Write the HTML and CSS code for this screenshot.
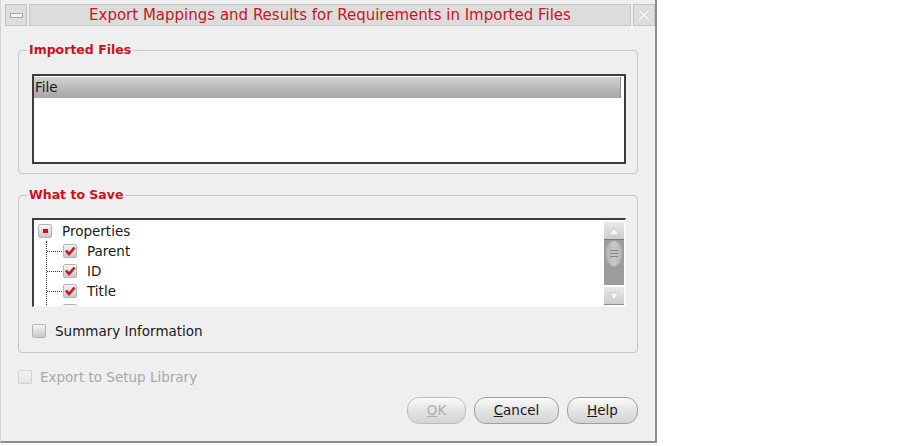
FILE: index.html
```html
<!DOCTYPE html>
<html>
<head>
<meta charset="utf-8">
<link rel="stylesheet" href="styles.css">
</head>
<body>
<div class="window">
  <div class="titlebar">
    <div class="tb-btn"><span class="dash"></span></div>
    <div class="tb-title">Export Mappings and Results for Requirements in Imported Files</div>
    <div class="tb-btn">
      <svg width="14" height="14" viewBox="0 0 14 14"><path d="M2 2 L12 12 M12 2 L2 12" stroke="#c4c4c4" stroke-width="4.5" fill="none" stroke-dasharray="0.8 1.4"/><path d="M2 2 L12 12 M12 2 L2 12" stroke="#f0f0f0" stroke-width="2.4" fill="none"/></svg>
    </div>
  </div>
  <div class="content">
    <fieldset class="group group-files">
      <legend>Imported Files</legend>
      <div class="listbox">
        <div class="list-header">File</div>
      </div>
    </fieldset>

    <fieldset class="group group-save">
      <legend>What to Save</legend>
      <div class="tree">
        <div class="tree-items">
          <div class="row">
            <span class="cb tri"><span class="tri-mark"></span></span>
            <span class="label">Properties</span>
          </div>
          <div class="children">
            <div class="row child"><span class="conn"></span><span class="cb checked"><svg width="14" height="14" viewBox="0 0 14 14"><path d="M3 6.5 L6 10 L11.5 3.5" stroke="#d3101c" stroke-width="2.6" fill="none"/></svg></span><span class="label">Parent</span></div>
            <div class="row child"><span class="conn"></span><span class="cb checked"><svg width="14" height="14" viewBox="0 0 14 14"><path d="M3 6.5 L6 10 L11.5 3.5" stroke="#d3101c" stroke-width="2.6" fill="none"/></svg></span><span class="label">ID</span></div>
            <div class="row child"><span class="conn"></span><span class="cb checked"><svg width="14" height="14" viewBox="0 0 14 14"><path d="M3 6.5 L6 10 L11.5 3.5" stroke="#d3101c" stroke-width="2.6" fill="none"/></svg></span><span class="label">Title</span></div>
            <div class="row child"><span class="conn"></span><span class="cb checked"><svg width="14" height="14" viewBox="0 0 14 14"><path d="M3 6.5 L6 10 L11.5 3.5" stroke="#d3101c" stroke-width="2.6" fill="none"/></svg></span></div>
          </div>
        </div>
        <div class="scrollbar">
          <div class="sb-btn"><svg width="16" height="14" viewBox="0 0 16 14"><path d="M3 11 L8 4 L13 11 Z" fill="#f6f6f6" stroke="#c8c8c8" stroke-width="1"/></svg></div>
          <div class="sb-track">
            <div class="sb-thumb"><span></span><span></span><span></span></div>
          </div>
          <div class="sb-btn down"><svg width="16" height="14" viewBox="0 0 16 14"><path d="M3 4 L8 11 L13 4 Z" fill="#f6f6f6" stroke="#c8c8c8" stroke-width="1"/></svg></div>
        </div>
      </div>
      <div class="check-row summary">
        <span class="cb"></span>
        <span class="label">Summary Information</span>
      </div>
    </fieldset>

    <div class="check-row export disabled">
      <span class="cb"></span>
      <span class="label">Export to Setup Library</span>
    </div>

    <div class="buttons">
      <div class="btn btn-ok disabled"><u>O</u>K</div>
      <div class="btn btn-cancel"><u>C</u>ancel</div>
      <div class="btn btn-help"><u>H</u>elp</div>
    </div>
  </div>
</div>
</body>
</html>
```

FILE: styles.css
```css
html, body {
  margin: 0;
  padding: 0;
  background: #ffffff;
}

body {
  font-family: "DejaVu Sans", "Liberation Sans", sans-serif;
  font-size: 13.5px;
  color: #1a1a1a;
}

.window {
  width: 654px;
  height: 441px;
  background: #efefef;
  border-left: 1px solid #d6d6d6;
  border-right: 2px solid #8c8c8c;
  border-bottom: 2px solid #8c8c8c;
  display: flex;
  flex-direction: column;
}

/* Title bar */
.titlebar {
  display: flex;
  gap: 2px;
  padding: 4px 0 0 4px;
  height: 22px;
}

.tb-btn {
  width: 20px;
  height: 20px;
  border: 1px solid #c2c2c2;
  background: #dedede;
  display: flex;
  align-items: center;
  justify-content: center;
}

.tb-btn .dash {
  width: 11px;
  height: 3px;
  border: 1px solid #a6a6a6;
  background: #f4f4f4;
}

.tb-title {
  flex: 1;
  height: 20px;
  border: 1px solid #c8c8c8;
  background: #dcdcdc;
  color: #cc1424;
  font-size: 15px;
  line-height: 20px;
  text-align: center;
  white-space: nowrap;
}

/* Content */
.content {
  flex: 1;
  padding: 16px 17px 0 17px;
  display: flex;
  flex-direction: column;
}

.group {
  margin: 0;
  border: 1px solid #c4c4c4;
  border-radius: 4px;
  padding: 0 11px 0 13px;
  min-width: 0;
}

.group legend {
  padding: 0 2px;
  margin-left: -5px;
  color: #d0101c;
  font-weight: bold;
  font-size: 12.5px;
  line-height: 16px;
}

.group-files {
  padding-top: 16px;
  padding-bottom: 9px;
}

.listbox {
  height: 86px;
  border: 2px solid #3c3c3c;
  background: #ffffff;
}

.list-header {
  height: 21px;
  margin-top: 1px;
  width: calc(100% - 3px);
  border-right: 1px solid #8e8e8e;
  background: linear-gradient(#d2d2d2, #b6b6b6 60%, #a8a8a8);
  line-height: 21px;
  padding-left: 1px;
  box-sizing: border-box;
  color: #1a1a1a;
}

.group-save {
  margin-top: 13px;
  padding-top: 15px;
  padding-bottom: 11px;
}

.tree {
  height: 86px;
  border-top: 2px solid #3e3e3e;
  border-left: 2px solid #3e3e3e;
  border-right: 1px solid #f8f8f8;
  border-bottom: 1px solid #f8f8f8;
  background: #ffffff;
  display: flex;
}

.tree-items {
  flex: 1;
  overflow: hidden;
  padding: 1px 0 0 4px;
}

.row {
  height: 20px;
  display: flex;
  align-items: center;
  white-space: nowrap;
}

.row .label {
  margin-left: 10px;
}

.children {
  margin-left: 8px;
  border-left: 1px dotted #333;
}

.conn {
  width: 15px;
  height: 0;
  border-top: 1px dotted #333;
  margin-right: 1px;
}

.cb {
  width: 12px;
  height: 12px;
  border: 1px solid #b4b4b4;
  border-radius: 2px;
  background: linear-gradient(#f6f6f6, #dcdcdc 55%, #c8c8c8);
  display: inline-flex;
  align-items: center;
  justify-content: center;
  flex: none;
  position: relative;
}

.cb svg {
  position: absolute;
  left: -1px;
  top: -1px;
}

.tri-mark {
  width: 5px;
  height: 4px;
  background: #d3101c;
}

/* Scrollbar */
.scrollbar {
  width: 20px;
  margin: 2px 1px 1px 0;
  display: flex;
  flex-direction: column;
}

.sb-btn {
  height: 17px;
  border-bottom: 1px solid #7a7a7a;
  background: linear-gradient(#e8e8e8, #cdcdcd);
  display: flex;
  align-items: center;
  justify-content: center;
  flex: none;
}

.sb-btn.down {
  border-bottom: 1px solid #8a8a8a;
}

.sb-track {
  flex: 1;
  background: #9c9c9c;
  margin-bottom: 2px;
  padding: 0 1px;
}

.sb-thumb {
  height: 25px;
  border: 1px solid #a2a2a2;
  border-radius: 9px / 13px;
  background: linear-gradient(90deg, #b2b2b2, #c8c8c8 50%, #b4b4b4);
  display: flex;
  flex-direction: column;
  align-items: center;
  justify-content: center;
  gap: 2px;
}

.sb-thumb span {
  width: 8px;
  height: 1px;
  background: #868686;
}

/* Check rows */
.check-row {
  display: flex;
  align-items: center;
  height: 20px;
  white-space: nowrap;
}

.check-row .label {
  margin-left: 9px;
}

.summary {
  margin-top: 14px;
}

.export {
  margin-top: 14px;
}

.export .label {
  margin-left: 8px;
}

.disabled .cb {
  border-color: #d2d2d2;
  background: linear-gradient(#f2f2f2, #e4e4e4);
}

.disabled .label {
  color: #a8a8a8;
}

/* Buttons */
.buttons {
  display: flex;
  justify-content: flex-end;
  gap: 8px;
  margin-top: 10px;
}

.btn {
  height: 25px;
  border: 1px solid #9e9e9e;
  border-radius: 12px;
  background: linear-gradient(#fafafa, #e4e4e4 50%, #d4d4d4);
  line-height: 25px;
  text-align: center;
  color: #1a1a1a;
}

.btn-ok { width: 57px; }
.btn-cancel { width: 83px; }
.btn-help { width: 69px; }

.btn.disabled {
  color: #b0b0b0;
  border-color: #bdbdbd;
}
```
